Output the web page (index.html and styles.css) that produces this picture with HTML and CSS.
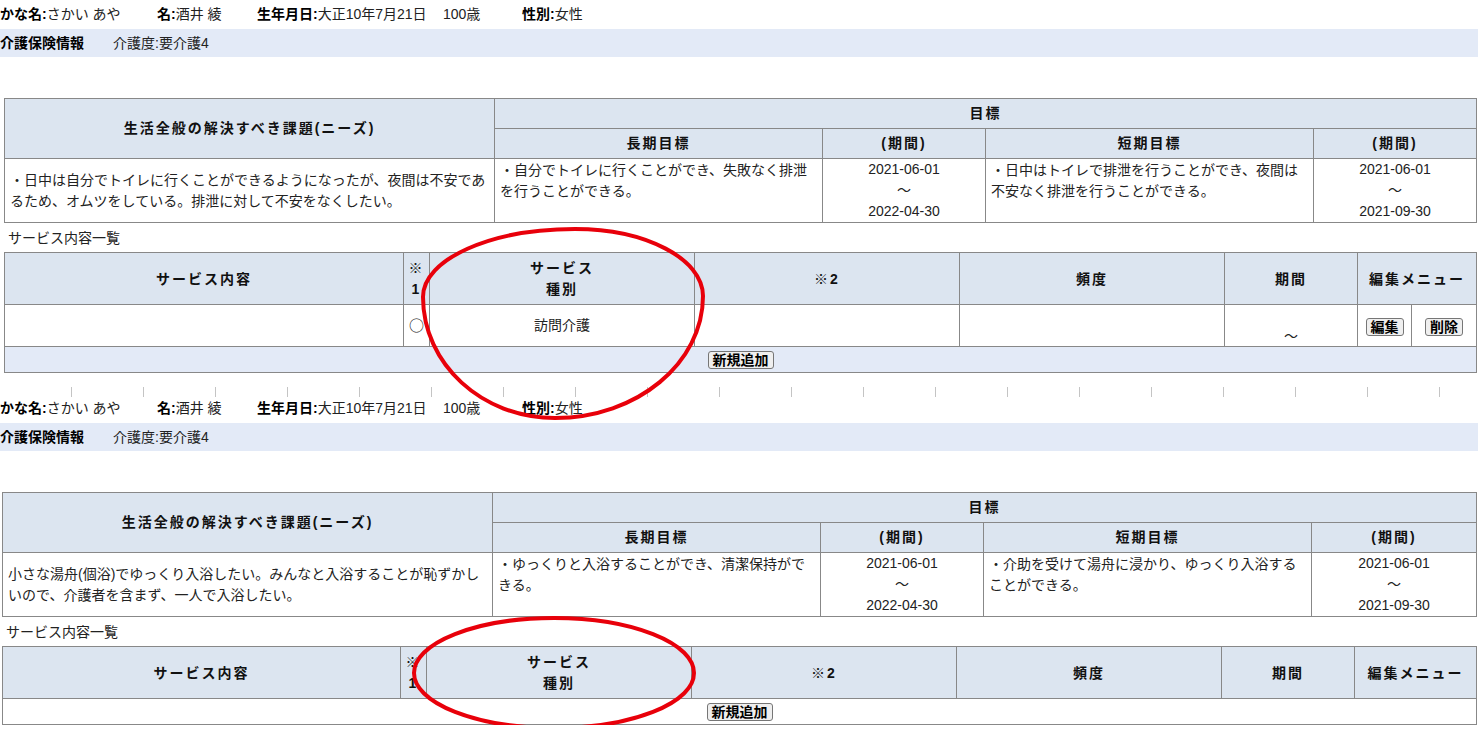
FILE: index.html
```html
<!DOCTYPE html>
<html lang="ja">
<head>
    <meta charset="UTF-8">
    <title>居宅サービス計画書</title>
    <link rel="stylesheet" href="styles.css">
</head>
<body>
    <div class="sheet">
        <div class="person">
            <span class="kana"><b>かな名:</b>さかい あや</span>
            <span class="name"><b>名:</b>酒井 綾</span>
            <span class="birth"><b>生年月日:</b>大正10年7月21日</span>
            <span class="age">100歳</span>
            <span><b>性別:</b>女性</span>
        </div>
        <div class="care"><b>介護保険情報</b><span class="care-level">介護度:要介護4</span></div>

        <table class="plan">
            <colgroup>
                <col class="c-needs"><col class="c-goal"><col class="c-term"><col class="c-goal"><col>
            </colgroup>
            <tr>
                <th rowspan="2">生活全般の解決すべき課題(ニーズ)</th>
                <th colspan="4">目標</th>
            </tr>
            <tr>
                <th>長期目標</th><th>(期間)</th><th>短期目標</th><th>(期間)</th>
            </tr>
            <tr>
                <td class="needs">・日中は自分でトイレに行くことができるようになったが、夜間は不安であるため、オムツをしている。排泄に対して不安をなくしたい。</td>
                <td class="goal">・自分でトイレに行くことができ、失敗なく排泄を行うことができる。</td>
                <td class="term">2021-06-01<br>～<br>2022-04-30</td>
                <td class="goal">・日中はトイレで排泄を行うことができ、夜間は不安なく排泄を行うことができる。</td>
                <td class="term">2021-06-01<br>～<br>2021-09-30</td>
            </tr>
        </table>

        <div class="list-title">サービス内容一覧</div>
        <table class="service">
            <colgroup>
                <col class="c-content"><col class="c-mark"><col class="c-kind"><col class="c-kind"><col class="c-kind"><col class="c-period"><col class="c-edit"><col>
            </colgroup>
            <tr>
                <th>サービス内容</th><th>※<br>1</th><th>サービス<br>種別</th><th>※2</th><th>頻度</th><th>期間</th><th colspan="2">編集メニュー</th>
            </tr>
            <tr class="item">
                <td></td><td class="mark">○</td><td>訪問介護</td><td></td><td></td><td><br>～</td>
                <td><button class="btn">編集</button></td>
                <td><button class="btn">削除</button></td>
            </tr>
            <tr class="add-row">
                <td colspan="8"><button class="btn">新規追加</button></td>
            </tr>
        </table>
    </div>

    <div class="page-break"></div>

    <div class="sheet sheet-b">
        <div class="person">
            <span class="kana"><b>かな名:</b>さかい あや</span>
            <span class="name"><b>名:</b>酒井 綾</span>
            <span class="birth"><b>生年月日:</b>大正10年7月21日</span>
            <span class="age">100歳</span>
            <span><b>性別:</b>女性</span>
        </div>
        <div class="care"><b>介護保険情報</b><span class="care-level">介護度:要介護4</span></div>

        <table class="plan">
            <colgroup>
                <col class="c-needs"><col class="c-goal"><col class="c-term"><col class="c-goal"><col>
            </colgroup>
            <tr>
                <th rowspan="2">生活全般の解決すべき課題(ニーズ)</th>
                <th colspan="4">目標</th>
            </tr>
            <tr>
                <th>長期目標</th><th>(期間)</th><th>短期目標</th><th>(期間)</th>
            </tr>
            <tr>
                <td class="needs">小さな湯舟(個浴)でゆっくり入浴したい。みんなと入浴することが恥ずかしいので、介護者を含まず、一人で入浴したい。</td>
                <td class="goal">・ゆっくりと入浴することができ、清潔保持ができる。</td>
                <td class="term">2021-06-01<br>～<br>2022-04-30</td>
                <td class="goal">・介助を受けて湯舟に浸かり、ゆっくり入浴することができる。</td>
                <td class="term">2021-06-01<br>～<br>2021-09-30</td>
            </tr>
        </table>

        <div class="list-title">サービス内容一覧</div>
        <table class="service">
            <colgroup>
                <col class="c-content"><col class="c-mark"><col class="c-kind"><col class="c-kind"><col class="c-kind"><col class="c-period"><col class="c-edit"><col>
            </colgroup>
            <tr>
                <th>サービス内容</th><th>※<br>1</th><th>サービス<br>種別</th><th>※2</th><th>頻度</th><th>期間</th><th colspan="2">編集メニュー</th>
            </tr>
            <tr class="add-row add-row-plain">
                <td colspan="8"><button class="btn">新規追加</button></td>
            </tr>
        </table>
    </div>

    <!-- red marker circles drawn over the screenshot -->
    <svg class="marks" width="1478" height="732" viewBox="0 0 1478 732">
        <path d="M423 297 C423 259 491 229 575 229 C646 229 703 259 703 296 C703 363 637 418 555 418 C482 418 423 364 423 297 Z"/>
        <ellipse cx="554" cy="673" rx="140" ry="55"/>
    </svg>
</body>
</html>
```

FILE: styles.css
```css
body {
    margin: 0;
    font-family: "Liberation Sans", "Noto Sans CJK JP", sans-serif;
    font-size: 14px;
    color: #222;
    background-color: #fff;
    position: relative;
    overflow: hidden;
}

/* person header */
.person {
    display: flex;
    height: 29px;
    line-height: 29px;
    white-space: nowrap;
}
.person b {
    color: #000;
}
.person .kana { width: 157px; }
.person .name { width: 100px; }
.person .birth { width: 186px; }
.person .age { width: 79px; }

.care {
    height: 28px;
    line-height: 28px;
    background-color: #e3eaf7;
    margin-bottom: 41px;
    white-space: nowrap;
}
.care b {
    color: #000;
}
.care-level {
    margin-left: 29px;
}

/* tables */
table {
    border-collapse: collapse;
    table-layout: fixed;
    width: 1473px;
    margin-left: 4px;
}
.sheet-b table {
    width: 1475px;
    margin-left: 2px;
}
th, td {
    border: 1px solid #888;
    padding: 0 5px;
    line-height: 21px;
}
th {
    background-color: #dce5f0;
    color: #111;
    font-weight: bold;
    letter-spacing: 2px;
    padding: 4px 5px;
    text-align: center;
}

.c-needs { width: 490px; }
.c-goal { width: 328px; }
.c-term { width: 163px; }

.needs {
    vertical-align: middle;
}
.goal {
    vertical-align: top;
    padding-top: 1px;
}
.term {
    text-align: center;
    vertical-align: top;
}

.list-title {
    padding: 5px 0 3px 8px;
    line-height: 21px;
}
.sheet-b .list-title {
    padding-left: 6px;
}

.c-content { width: 399px; }
.c-mark { width: 26px; }
.c-kind { width: 265px; }
.c-period { width: 133px; }
.c-edit { width: 54px; }

.sheet-b .c-content { width: 398px; }

.service th {
    padding: 5px 2px 4px;
}
.service .item td {
    text-align: center;
    vertical-align: middle;
    padding: 0 2px;
    line-height: 20.5px;
}
.service .item .mark {
    font-family: "Noto Sans CJK JP", sans-serif;
    font-size: 15px;
}

.add-row td {
    background-color: #e3eaf7;
    text-align: center;
    padding: 4px 3px 3px;
    line-height: 0;
}
.add-row-plain td {
    background-color: #fff;
}

.btn {
    font-family: "Liberation Sans", "Noto Sans CJK JP", sans-serif;
    font-size: 14px;
    font-weight: bold;
    line-height: 16px;
    padding: 0 4px;
    margin: 0;
    border: 1px solid #767676;
    border-radius: 3px;
    background-color: #efefef;
    color: #000;
    vertical-align: middle;
}

/* page separator with tick marks */
.page-break {
    height: 24px;
    margin-bottom: -3px;
    background: repeating-linear-gradient(to right, transparent 0 71px, #c4c4c4 71px 72px) left bottom / 100% 10px no-repeat;
}

.marks {
    position: absolute;
    left: 0;
    top: 0;
    pointer-events: none;
    fill: none;
    stroke: #e8000a;
    stroke-width: 4;
}
```
